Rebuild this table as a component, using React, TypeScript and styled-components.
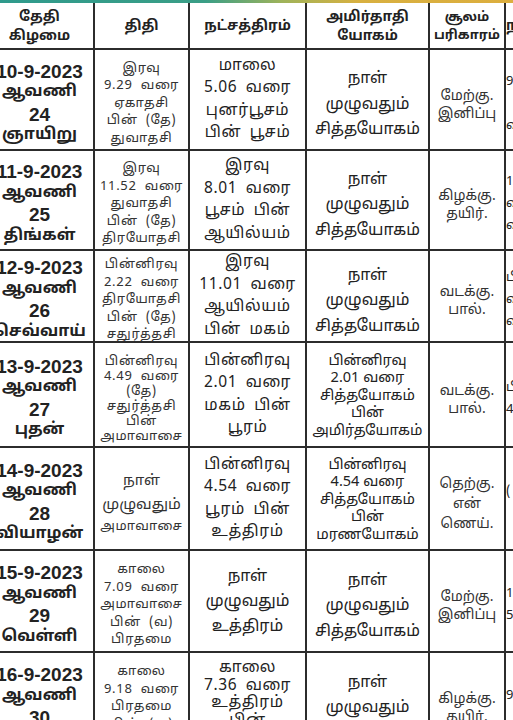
import React from 'react';
import styled, { createGlobalStyle } from 'styled-components';

const GlobalStyle = createGlobalStyle`
  html, body {
    margin: 0;
    padding: 0;
    background: #fff;
    overflow: hidden;
  }
  body {
    font-family: "Noto Sans Tamil", "Lohit Tamil", "Noto Sans", "Liberation Sans", sans-serif;
    color: #222;
  }
`;

const Page = styled.div`
  width: 513px;
  height: 720px;
  overflow: hidden;
  display: flex;
  flex-direction: column;
`;

const Strip = styled.div`
  height: 3px;
  flex: none;
  background: linear-gradient(90deg, #2f9a8c 0%, #3a9e86 40%, #9fb35a 55%, #d8b040 70%, #dcae3e 100%);
`;

const Grid = styled.div`
  display: grid;
  grid-template-columns: 107px 93px 115px 121px 74px 60px;
  grid-template-rows: 45px 99px 98px 90px 103px 101px 100px 100px;
  gap: 2px;
  background: #2c2c2c;
  margin-left: -14px;
  width: max-content;
`;

const Cell = styled.div<{
  $size: number;
  $lh: number;
  $pt?: number;
  $bold?: boolean;
  $tone?: string;
  $spacing?: number;
  $align?: string;
}>`
  background: #fff;
  display: flex;
  flex-direction: column;
  justify-content: center;
  align-items: ${(p) => p.$align || 'center'};
  text-align: center;
  font-size: ${(p) => p.$size}px;
  line-height: ${(p) => p.$lh}px;
  font-weight: ${(p) => (p.$bold ? 700 : 400)};
  color: ${(p) => p.$tone || '#222'};
  letter-spacing: ${(p) => p.$spacing || 0}px;
  word-spacing: ${(p) => (p.$spacing ? 4 : 0)}px;
  white-space: nowrap;
  overflow: hidden;
  padding-top: ${(p) => p.$pt ?? 2}px;
`;

const DateLine = styled.span`
  font-family: "Liberation Sans", "Noto Sans Tamil", sans-serif;
  font-size: 19px;
`;

const Line = styled.span<{ $big?: boolean }>`
  font-size: ${(p) => (p.$big ? '1.15em' : '1em')};
  line-height: ${(p) => (p.$big ? '1.6em' : 'inherit')};
  letter-spacing: ${(p) => (p.$big ? 0 : 'inherit')};
`;

type Row = {
  date: string;
  day: string;
  weekday: string;
  thithi: string[];
  star: string[];
  yogam: string[];
  soolam: string[];
  extra: string[];
  bigThithi?: boolean;
  bigStar?: boolean;
};

const rows: Row[] = [
  {
    date: '10-9-2023', day: '24', weekday: 'ஞாயிறு',
    thithi: ['இரவு', '9.29 வரை', 'ஏகாதசி', 'பின் (தே)', 'துவாதசி'],
    star: ['மாலை', '5.06 வரை', 'புனர்பூசம்', 'பின் பூசம்'],
    yogam: ['நாள்', 'முழுவதும்', 'சித்தயோகம்'],
    soolam: ['மேற்கு.', 'இனிப்பு'],
    extra: ['9.00', '', 'வரை'],
  },
  {
    date: '11-9-2023', day: '25', weekday: 'திங்கள்',
    thithi: ['இரவு', '11.52 வரை', 'துவாதசி', 'பின் (தே)', 'திரயோதசி'],
    star: ['இரவு', '8.01 வரை', 'பூசம் பின்', 'ஆயில்யம்'],
    yogam: ['நாள்', 'முழுவதும்', 'சித்தயோகம்'],
    soolam: ['கிழக்கு.', 'தயிர்.'],
    extra: ['1.30', 'வரை', 'வரை'],
  },
  {
    date: '12-9-2023', day: '26', weekday: 'செவ்வாய்',
    thithi: ['பின்னிரவு', '2.22 வரை', 'திரயோதசி', 'பின் (தே)', 'சதுர்த்தசி'],
    star: ['இரவு', '11.01 வரை', 'ஆயில்யம்', 'பின் மகம்'],
    yogam: ['நாள்', 'முழுவதும்', 'சித்தயோகம்'],
    soolam: ['வடக்கு.', 'பால்.'],
    extra: ['பின்', 'வரை', 'வரை'],
  },
  {
    date: '13-9-2023', day: '27', weekday: 'புதன்',
    thithi: ['பின்னிரவு', '4.49 வரை', '(தே)', 'சதுர்த்தசி', 'பின்', 'அமாவாசை'],
    star: ['பின்னிரவு', '2.01 வரை', 'மகம் பின்', 'பூரம்'],
    yogam: ['பின்னிரவு', '2.01 வரை', 'சித்தயோகம்', 'பின்', 'அமிர்தயோகம்'],
    soolam: ['வடக்கு.', 'பால்.'],
    extra: ['பின்', '4.30'],
  },
  {
    date: '14-9-2023', day: '28', weekday: 'வியாழன்',
    thithi: ['நாள்', 'முழுவதும்', 'அமாவாசை'],
    star: ['பின்னிரவு', '4.54 வரை', 'பூரம் பின்', 'உத்திரம்'],
    yogam: ['பின்னிரவு', '4.54 வரை', 'சித்தயோகம்', 'பின்', 'மரணயோகம்'],
    soolam: ['தெற்கு.', 'என்', 'ணெய்.'],
    extra: ['(', ''],
    bigThithi: true,
  },
  {
    date: '15-9-2023', day: '29', weekday: 'வெள்ளி',
    thithi: ['காலை', '7.09 வரை', 'அமாவாசை', 'பின் (வ)', 'பிரதமை'],
    star: ['நாள்', 'முழுவதும்', 'உத்திரம்'],
    yogam: ['நாள்', 'முழுவதும்', 'சித்தயோகம்'],
    soolam: ['மேற்கு.', 'இனிப்பு'],
    extra: ['1', '5'],
    bigStar: true,
  },
  {
    date: '16-9-2023', day: '30', weekday: 'சனி',
    thithi: ['காலை', '9.18 வரை', 'பிரதமை', 'பின் (வ)', 'துவிதியை'],
    star: ['காலை', '7.36 வரை', 'உத்திரம்', 'பின்', 'அஸ்தம்'],
    yogam: ['நாள்', 'முழுவதும்', 'சித்தயோகம்'],
    soolam: ['கிழக்கு.', 'தயிர்.'],
    extra: ['9', ''],
  },
];

const thithiLh = (n: number) => (n >= 6 ? 15 : n === 5 ? 17.5 : 22);

const App: React.FC = () => (
  <Page>
    <GlobalStyle />
    <Strip />
    <Grid>
      <Cell $size={14} $lh={19} $bold>
        <span>தேதி</span>
        <span>கிழமை</span>
      </Cell>
      <Cell $size={14} $lh={19} $bold>திதி</Cell>
      <Cell $size={14} $lh={19} $bold>நட்சத்திரம்</Cell>
      <Cell $size={14} $lh={19} $bold>
        <span>அமிர்தாதி</span>
        <span>யோகம்</span>
      </Cell>
      <Cell $size={13} $lh={18} $bold>
        <span>சூலம்</span>
        <span>பரிகாரம்</span>
      </Cell>
      <Cell $size={14} $lh={19} $bold $align="flex-start">நல்ல</Cell>

      {rows.map((r) => (
        <React.Fragment key={r.date}>
          <Cell $size={16} $lh={21.5} $pt={8} $bold>
            <DateLine>{r.date}</DateLine>
            <span>ஆவணி</span>
            <DateLine>{r.day}</DateLine>
            <span>{r.weekday}</span>
          </Cell>
          <Cell
            $size={13}
            $lh={r.bigThithi ? 20 : thithiLh(r.thithi.length)}
            $pt={10}
            $spacing={0.7}
            $tone="#333"
          >
            {r.thithi.map((t, i) => (
              <Line key={i} $big={r.bigThithi && i < 2}>{t}</Line>
            ))}
          </Cell>
          <Cell
            $size={r.bigStar ? 16 : 15.5}
            $lh={r.star.length >= 5 ? 17.5 : r.bigStar ? 25 : 22.5}
            $pt={2}
            $spacing={r.bigStar ? 0 : 0.6}
          >
            {r.star.map((t, i) => (
              <span key={i}>{t}</span>
            ))}
          </Cell>
          <Cell
            $size={r.yogam.length >= 5 ? 14.5 : 16}
            $lh={r.yogam.length >= 5 ? 17.5 : 25.5}
            $pt={r.yogam.length >= 5 ? 4 : 12}
          >
            {r.yogam.map((t, i) => (
              <span key={i}>{t}</span>
            ))}
          </Cell>
          <Cell $size={14} $lh={r.soolam.length > 2 ? 20 : 18} $pt={12} $tone="#333">
            {r.soolam.map((t, i) => (
              <span key={i}>{t}</span>
            ))}
          </Cell>
          <Cell $size={13} $lh={22} $pt={8} $align="flex-start">
            {r.extra.map((t, i) => (
              <span key={i}>{t || '\u00a0'}</span>
            ))}
          </Cell>
        </React.Fragment>
      ))}
    </Grid>
  </Page>
);

export default App;
